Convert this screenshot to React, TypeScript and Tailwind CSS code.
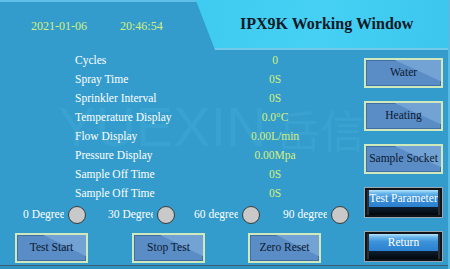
import React from "react";

const rows: [string, string][] = [
  ["Cycles", "0"],
  ["Spray Time", "0S"],
  ["Sprinkler Interval", "0S"],
  ["Temperature Display", "0.0°C"],
  ["Flow Display", "0.00L/min"],
  ["Pressure Display", "0.00Mpa"],
  ["Sample Off Time", "0S"],
  ["Sample Off Time", "0S"],
];

function BlueButton({ label, w }: { label: string; w: string }) {
  return (
    <div
      className={`relative ${w} h-[30px] border-2 border-[#cfe9bd] bg-[#5a8cc6] shadow-[inset_0_0_0_1px_#3f6fa6] flex items-center justify-center overflow-hidden`}
    >
      <span className="absolute inset-0 bg-[#73a2d5] [clip-path:polygon(38%_0,100%_0,100%_82%)]" />
      <span className="relative text-[11.5px] text-[#0b1a2e] leading-none">{label}</span>
    </div>
  );
}

function DarkButton({ label }: { label: string }) {
  return (
    <div className="w-[79px] h-[31px] border border-[#9aa6b0] bg-[#101418] p-[2px]">
      <div className="h-full flex flex-col overflow-hidden border-x-2 border-[#2a2f36]">
        <div className="flex-1 bg-[linear-gradient(#b6e4fb_0%,#6cb8ec_18%,#3d92da_45%,#2a80cf_100%)] flex items-center justify-center">
          <span className="text-[11.5px] text-white leading-none whitespace-nowrap">{label}</span>
        </div>
        <div className="h-[8px] bg-[linear-gradient(#0e1f30,#02070c)]" />
      </div>
    </div>
  );
}

function Degree({ label, textW, gapL }: { label: string; textW: string; gapL: string }) {
  return (
    <div className={`flex items-center ${gapL}`}>
      <div className={`${textW} overflow-hidden whitespace-nowrap text-[11.5px] text-white leading-none`}>{label}</div>
      <div className="ml-[4px] w-[18px] h-[18px] rounded-full bg-[#c9c9c9] border border-[#3a3a3a]" />
    </div>
  );
}

export default function App() {
  return (
    <div
      className="w-[450px] h-[269px] bg-[#339ccc] relative overflow-hidden flex flex-col border-r-2 border-[#58bbe2]"
      style={{ fontFamily: '"Liberation Serif", "Times New Roman", serif' }}
    >
      {/* watermark */}
      <div
        className="absolute left-[58px] top-[99px] flex items-end gap-[10px] text-[#39a2d1] pointer-events-none whitespace-nowrap leading-none"
        style={{ fontFamily: '"Liberation Sans", "Noto Sans CJK SC", sans-serif' }}
      >
        <span className="text-[56px]">YUEXIN</span>
        <span className="text-[44px] pb-[4px]" style={{ fontFamily: '"Noto Sans CJK SC", sans-serif' }}>岳信</span>
      </div>

      {/* header */}
      <div className="h-[50px] flex border-t-2 border-[#5ec0e8] relative">
        <div className="w-[195px] flex items-center pl-[31px] gap-[33px] text-[12px] text-[#d6f07c] pb-[1px]">
          <span>2021-01-06</span>
          <span>20:46:54</span>
        </div>
        <div className="flex-1 bg-[linear-gradient(100deg,#3fcaf0_0%,#45d0f4_50%,#3cc6ee_100%)] border-b-2 border-[#72c9ea] [clip-path:polygon(0_-2px,100%_-2px,100%_100%,20px_100%)] -mt-[2px] flex items-center pl-[45px]">
          <span className="text-[16px] font-bold text-[#0e1a26] leading-none">IPX9K Working Window</span>
        </div>
      </div>

      {/* body */}
      <div className="flex-1 flex relative z-10">
        <div className="w-[364px] flex flex-col">
          <div className="pt-[1px] flex flex-col">
            {rows.map(([l, v], i) => (
              <div key={i} className="h-[19px] flex items-center text-[11.5px] leading-none">
                <div className="pl-[75px] w-[215px] text-white">{l}</div>
                <div className="w-[120px] text-center text-[#d6f07c]">{v}</div>
              </div>
            ))}
          </div>
          <div className="h-[24px] flex items-center pl-[23px]">
            <Degree label="0 Degree" textW="w-[41px]" gapL="" />
            <Degree label="30 Degree" textW="w-[45px]" gapL="ml-[22px]" />
            <Degree label="60 degree" textW="w-[44px]" gapL="ml-[19px]" />
            <Degree label="90 degree" textW="w-[44px]" gapL="ml-[23px]" />
          </div>
          <div className="mt-[6px] flex pl-[15px]">
            <BlueButton label="Test Start" w="w-[73px]" />
            <div className="ml-[44px]">
              <BlueButton label="Stop Test" w="w-[73px]" />
            </div>
            <div className="ml-[43px]">
              <BlueButton label="Zero Reset" w="w-[73px]" />
            </div>
          </div>
        </div>
        <div className="flex flex-col pt-[8px] gap-[13px]">
          <BlueButton label="Water" w="w-[79px]" />
          <BlueButton label="Heating" w="w-[79px]" />
          <BlueButton label="Sample Socket" w="w-[79px]" />
          <DarkButton label="Test Parameter" />
          <DarkButton label="Return" />
        </div>
      </div>
      <div className="h-[1px] bg-[#3d5d70]" />
      <div className="h-[3px] bg-[#2f93c2]" />
    </div>
  );
}
